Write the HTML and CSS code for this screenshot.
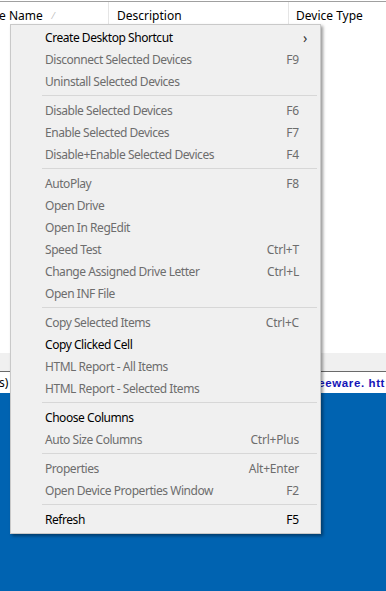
FILE: index.html
```html
<!DOCTYPE html>
<html>
<head>
<meta charset="utf-8">
<link rel="stylesheet" href="styles.css">
</head>
<body>
<div class="screen">
  <div class="app">
    <div class="header">
      <div class="col c1">e Name <span class="sort">⁄</span></div>
      <div class="col c2">Description</div>
      <div class="col c3">Device Type</div>
    </div>
    <div class="list"></div>
    <div class="hscroll"></div>
    <div class="status">
      <span class="st-left">s)</span>
      <span class="st-right">eeware. htt</span>
    </div>
  </div>
  <div class="desktop"></div>

  <div class="menu">
    <div class="item on"><span>Create Desktop Shortcut</span><span class="arrow">›</span></div>
    <div class="item"><span>Disconnect Selected Devices</span><span class="key">F9</span></div>
    <div class="item"><span>Uninstall Selected Devices</span></div>
    <div class="sep"></div>
    <div class="item"><span>Disable Selected Devices</span><span class="key">F6</span></div>
    <div class="item"><span>Enable Selected Devices</span><span class="key">F7</span></div>
    <div class="item"><span>Disable+Enable Selected Devices</span><span class="key">F4</span></div>
    <div class="sep"></div>
    <div class="item"><span>AutoPlay</span><span class="key">F8</span></div>
    <div class="item"><span>Open Drive</span></div>
    <div class="item"><span>Open In RegEdit</span></div>
    <div class="item"><span>Speed Test</span><span class="key">Ctrl+T</span></div>
    <div class="item"><span>Change Assigned Drive Letter</span><span class="key">Ctrl+L</span></div>
    <div class="item"><span>Open INF File</span></div>
    <div class="sep"></div>
    <div class="item"><span>Copy Selected Items</span><span class="key">Ctrl+C</span></div>
    <div class="item on"><span>Copy Clicked Cell</span></div>
    <div class="item"><span>HTML Report - All Items</span></div>
    <div class="item"><span>HTML Report - Selected Items</span></div>
    <div class="sep"></div>
    <div class="item on"><span>Choose Columns</span></div>
    <div class="item"><span>Auto Size Columns</span><span class="key">Ctrl+Plus</span></div>
    <div class="sep"></div>
    <div class="item"><span>Properties</span><span class="key">Alt+Enter</span></div>
    <div class="item"><span>Open Device Properties Window</span><span class="key">F2</span></div>
    <div class="sep"></div>
    <div class="item on"><span>Refresh</span><span class="key">F5</span></div>
  </div>
</div>
</body>
</html>
```

FILE: styles.css
```css
html, body {
  margin: 0;
  padding: 0;
}
body {
  width: 386px;
  height: 591px;
  overflow: hidden;
  font-family: "Noto Sans", "Open Sans", sans-serif;
  font-size: 12px;
}
.screen {
  position: relative;
  width: 386px;
  height: 591px;
  display: flex;
  flex-direction: column;
}
.app {
  display: flex;
  flex-direction: column;
  background: #fff;
}
.header {
  height: 24px;
  border-top: 1px solid #a0a0a0;
  display: flex;
  align-items: center;
  color: #000;
  box-sizing: border-box;
  margin-top: 1px;
}
.col {
  height: 100%;
  display: flex;
  align-items: center;
  box-sizing: border-box;
  white-space: nowrap;
  padding-top: 3px;
}
.c1 { width: 110px; border-right: 1px solid #e5e5e5; margin-left: -1px; }
.c2 { width: 180px; border-right: 1px solid #e5e5e5; padding-left: 8px; }
.c3 { flex: 1; padding-left: 7px; }
.sort {
  color: #b5b5b5;
  font-size: 9px;
  margin-left: 10px;
}
.list {
  height: 328px;
}
.hscroll {
  height: 18px;
  background: #f0f0f0;
  border-bottom: 1px solid #6a6a6a;
}
.status {
  height: 21px;
  display: flex;
  align-items: center;
  justify-content: space-between;
  background: #fff;
  white-space: nowrap;
}
.st-left {
  margin-left: -1px;
}
.st-right {
  color: #1515b8;
  font-weight: bold;
  font-family: "Liberation Sans", sans-serif;
  font-size: 11.5px;
  letter-spacing: 0.6px;
  margin-right: 1px;
}
.desktop {
  flex: 1;
  background: #0063b1;
}
.menu {
  position: absolute;
  left: 10px;
  top: 24px;
  width: 311px;
  box-sizing: border-box;
  background: #f0f0f0;
  border: 1px solid #c9c9c9;
  box-shadow: 2px 2px 3px rgba(0, 0, 0, 0.4);
  padding: 1px 2px 3px 2px;
}
.item {
  height: 22px;
  display: flex;
  align-items: center;
  justify-content: space-between;
  padding-left: 32px;
  padding-right: 19px;
  color: #6d6d6d;
  white-space: nowrap;
  letter-spacing: -0.45px;
}
.item.on {
  color: #000;
}
.key {
  letter-spacing: -0.2px;
}
.arrow {
  font-size: 14px;
  color: #333;
  margin-right: -8px;
}
.sep {
  height: 1px;
  background: #d7d7d7;
  margin: 3px 1px 3px 29px;
}
```
